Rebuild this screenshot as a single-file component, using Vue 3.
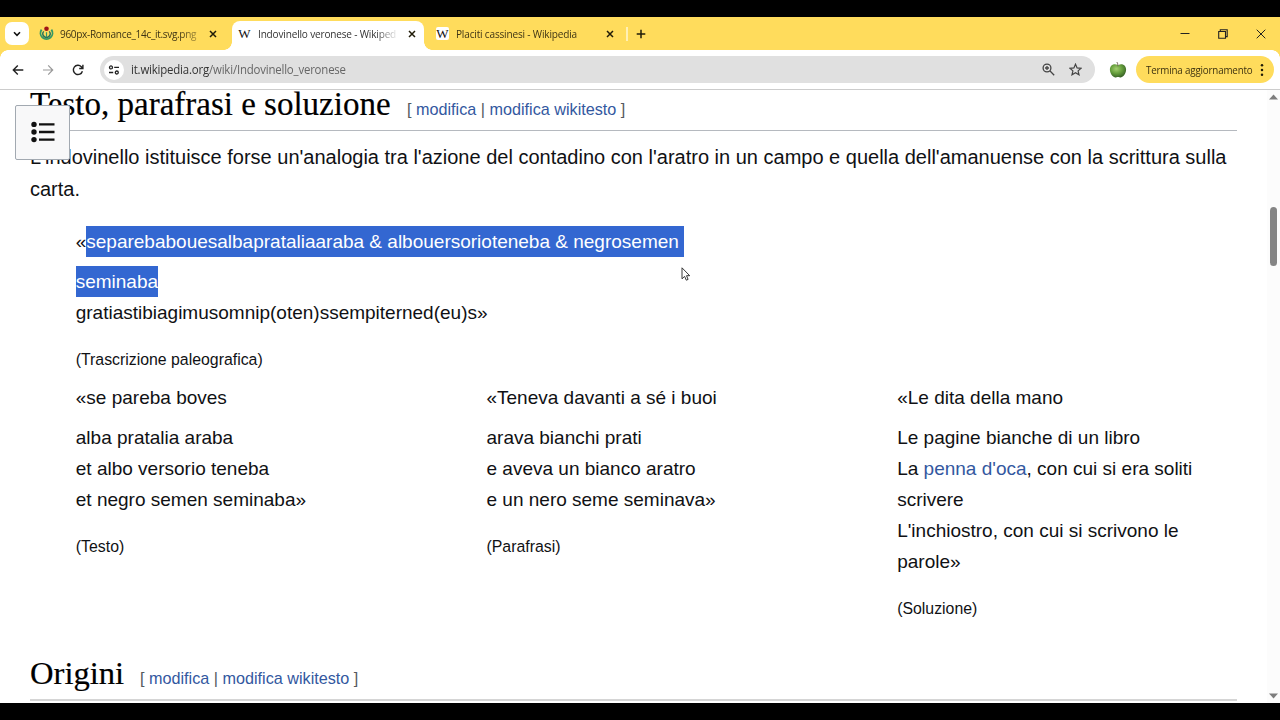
<script setup>
const tabs = [
  { title: '960px-Romance_14c_it.svg.png', kind: 'wm', cls: 'first' },
  { title: 'Indovinello veronese - Wikiped', kind: 'w', cls: 'active' },
  { title: 'Placiti cassinesi - Wikipedia', kind: 'w', cls: 'third' },
]
const columns = [
  { lines: ['«se pareba boves', 'alba pratalia araba', 'et albo versorio teneba', 'et negro semen seminaba»'], caption: '(Testo)' },
  { lines: ['«Teneva davanti a sé i buoi', 'arava bianchi prati', 'e aveva un bianco aratro', 'e un nero seme seminava»'], caption: '(Parafrasi)' },
]
</script>

<template>
  <div class="screen">
    <header class="tabstrip">
      <div class="search-tabs">
        <svg width="10" height="8" viewBox="0 0 10 8"><path d="M2 2.3 5 5.3 8 2.3" fill="none" stroke="#111" stroke-width="1.6" /></svg>
      </div>
      <div v-for="t in tabs" :key="t.title" class="tab" :class="t.cls">
        <svg v-if="t.kind === 'wm'" class="fav" width="15" height="15" viewBox="0 0 15 15">
          <circle cx="7.5" cy="2.8" r="2.3" fill="#a01515" />
          <path d="M2.600 3.600a6 6 0 1 0 9.800 0" fill="none" stroke="#396" stroke-width="1.900" />
          <path d="M4.800 5.400a3.600 3.600 0 1 0 5.400 0" fill="none" stroke="#28705c" stroke-width="1.400" />
          <path d="M7.5 6.2v5" stroke="#396" stroke-width="1.2" />
        </svg>
        <span v-else class="fav wiki">W</span>
        <span class="title">{{ t.title }}</span>
        <svg class="close" width="8" height="8" viewBox="0 0 8 8"><path d="m1 1 6 6M7 1 1 7" fill="none" stroke="#201c08" stroke-width="1.5" /></svg>
      </div>
      <i class="sep"></i>
      <svg class="plus" width="10" height="10" viewBox="0 0 10 10"><path d="M5 .7v8.6M.7 5h8.6" stroke="#201c08" stroke-width="1.5" /></svg>
      <div class="win">
        <svg width="10" height="10" viewBox="0 0 10 10"><path d="M.5 4.500h9" stroke="#222" /></svg>
        <svg width="10" height="10" viewBox="0 0 10 10"><path d="M.7 2.5h6.8v6.8H.7zM2.3 2.5V.8H9.2v6.8H7.5" fill="none" stroke="#222" stroke-width="1.1" /></svg>
        <svg width="10" height="10" viewBox="0 0 10 10"><path d="m.7.7 8.6 8.6M9.3.7.7 9.3" stroke="#222" stroke-width="1" /></svg>
      </div>
    </header>

    <div class="toolbar">
      <svg class="back" width="12" height="12" viewBox="0 0 12 12"><path d="M11.300 6H1.5M5.8 1.4 1.3 6l4.5 4.6" fill="none" stroke="#222" stroke-width="1.4" /></svg>
      <svg class="fwd" width="12" height="12" viewBox="0 0 12 12"><path d="M1 6h9.5M6.2 1.4 10.7 6l-4.5 4.6" fill="none" stroke="#999" stroke-width="1.2" /></svg>
      <svg class="reload" width="12" height="12" viewBox="0 0 12 12"><path d="M10.4 7.2A4.6 4.6 0 1 1 9.3 2.7L10.6 4M10.9.8v3.7H7.2" fill="none" stroke="#222" stroke-width="1.4" /></svg>
      <div class="omnibox">
        <div class="site">
          <svg width="12" height="10" viewBox="0 0 12 10" fill="none" stroke="#222" stroke-width="1.3"><circle cx="3" cy="2.4" r="1.5" /><path d="M6.2 2.4h4.8M1 7.5h4.2" /><circle cx="8.8" cy="7.5" r="1.5" /></svg>
        </div>
        <span class="url">it.wikipedia.org<em>/wiki/Indovinello_veronese</em></span>
        <svg class="zoomi" width="13" height="13" viewBox="0 0 13 13" fill="none" stroke="#444" stroke-width="1.3"><circle cx="5" cy="5" r="3.9" /><path d="m7.8 7.8 4.4 4.4M5 3v4M3 5h4" /></svg>
        <svg class="star" width="13" height="13" viewBox="0 0 13 13"><path d="m6.5 1.2 1.6 3.7 4 .4-3 2.6.9 3.9-3.5-2.1L3 11.8l.9-3.9-3-2.6 4-.4z" fill="none" stroke="#444" stroke-width="1.2" /></svg>
      </div>
      <svg class="apple" width="18" height="18" viewBox="0 0 18 18">
        <defs><radialGradient id="ap" cx=".4" cy=".35" r=".65"><stop offset="0" stop-color="#a4cf70" /><stop offset=".55" stop-color="#659e3c" /><stop offset="1" stop-color="#3c6628" /></radialGradient></defs>
        <path d="M9 4.3C5 1.8.9 4.2.9 8.6c0 3.7 2.6 7.8 5.2 7.8 1.2 0 1.8-.5 2.9-.5s1.7.5 2.9.5c2.6 0 5.2-4.1 5.2-7.8C17.100 4.200 13 1.800 9 4.300z" fill="url(#ap)" />
        <path d="M9 5.300Q9 2.500 7.900 1" fill="none" stroke="#6a5b50" stroke-width=".9" />
      </svg>
      <div class="update"><span>Termina aggiornamento</span>
        <svg width="4" height="14" viewBox="0 0 4 14" fill="#201c08"><circle cx="2" cy="2.300" r="1.250" /><circle cx="2" cy="7" r="1.250" /><circle cx="2" cy="11.700" r="1.250" /></svg>
      </div>
    </div>

    <main class="page">
      <article>
        <h2 class="h-first"><span class="ht">Testo, parafrasi e soluzione</span><span class="edit">[ <a>modifica</a> | <a>modifica wikitesto</a> ]</span></h2>
        <p class="intro">L'indovinello istituisce forse un'analogia tra l'azione del contadino con l'aratro in un campo e quella dell'amanuense con la scrittura sulla<br />carta.</p>
        <div class="poem quote">
          <div class="first-line">«<span class="sel">separebabouesalbaprataliaaraba &amp; albouersorioteneba &amp; negrosemen </span></div>
          <div><span class="sel">seminaba</span></div>
          <div>gratiastibiagimusomnip(oten)ssempiterned(eu)s»</div>
          <div class="caption">(Trascrizione paleografica)</div>
        </div>
        <div class="cols">
          <div v-for="c in columns" :key="c.caption" class="poem">
            <div v-for="(l, i) in c.lines" :key="l" :class="{ 'first-line': i === 0 }">{{ l }}</div>
            <div class="caption">{{ c.caption }}</div>
          </div>
          <div class="poem">
            <div class="first-line">«Le dita della mano</div>
            <div>Le pagine bianche di un libro</div>
            <div>La <a>penna d'oca</a>, con cui si era soliti<br />scrivere</div>
            <div>L'inchiostro, con cui si scrivono le<br />parole»</div>
            <div class="caption">(Soluzione)</div>
          </div>
        </div>
        <h2 class="h-second"><span class="ht">Origini</span><span class="edit">[ <a>modifica</a> | <a>modifica wikitesto</a> ]</span></h2>
      </article>

      <div class="toc">
        <svg width="24" height="22" viewBox="0 0 24 22"><g fill="#111"><circle cx="3" cy="3.400" r="2.700" /><circle cx="3" cy="11" r="2.700" /><circle cx="3" cy="18.600" r="2.700" /></g><path d="M8 3.400h15.500M8 11h15.500M8 18.600h15.500" stroke="#111" stroke-width="2.300" /></svg>
      </div>
      <div class="scroll">
        <svg width="9" height="6" viewBox="0 0 9 6"><path d="M4.500.5 9 5.500H0z" fill="#7d7d7d" /></svg>
        <i class="thumb"></i>
        <svg width="9" height="6" viewBox="0 0 9 6"><path d="M4.500 5.500 9 .5H0z" fill="#7d7d7d" /></svg>
      </div>
      <svg class="cursor" width="10" height="15" viewBox="0 0 10 15"><path d="M1 .8v11l2.600-2.400 1.700 3.800 1.800-.8-1.600-3.700H8.700z" fill="#fff" stroke="#222" stroke-width=".9" /></svg>
    </main>
  </div>
</template>

<style>
body { background: #000; overflow: hidden; }
</style>
<style scoped>
* { box-sizing: border-box; }
svg { display: block; flex: none; }
.screen { width: 1280px; height: 720px; background: #000; padding: 17px 0; display: flex; flex-direction: column; font-family: "Open Sans", "Noto Sans", sans-serif; }
.tabstrip { height: 33px; background: #ffdc5c; display: flex; align-items: center; flex: none; padding-left: 5px; }
.search-tabs { width: 24px; height: 23px; border-radius: 7px; background: #fff; display: grid; place-items: center; }
.tab { height: 33px; display: flex; align-items: center; font-size: 11px; color: #3f3515; position: relative; }
.tab.first { width: 203px; padding-left: 10px; }
.tab.active { width: 192px; height: 29px; margin-top: 4px; padding: 0 0 4px 6px; background: #fff; border-radius: 8px 8px 0 0; color: #333; }
.tab.active::before, .tab.active::after { content: ""; position: absolute; bottom: 0; width: 8px; height: 8px; }
.tab.active::before { left: -8px; background: radial-gradient(circle at 0 0, transparent 7.500px, #fff 8px); }
.tab.active::after { right: -8px; background: radial-gradient(circle at 100% 0, transparent 7.500px, #fff 8px); }
.tab.third { width: 202px; padding-left: 12px; }
.fav { width: 15px; flex: none; }
.wiki { width: 13px; height: 13px; border-radius: 2px; background: #fff; color: #111; font: 13px/13px "Liberation Serif", serif; display: flex; justify-content: center; }
.title { white-space: nowrap; flex: none; margin-left: 7px; width: 138px; line-height: 18px; letter-spacing: -.2px; transform: scaleX(.915); transform-origin: 0 50%; }
.first .title { margin-left: 6px; letter-spacing: -.36px; -webkit-mask-image: linear-gradient(90deg, #000 86%, rgba(0, 0, 0, .4)); mask-image: linear-gradient(90deg, #000 86%, rgba(0, 0, 0, .4)); width: 151px; margin-right: -14px; }
.active .title { width: 153px; margin-right: -15px; -webkit-mask-image: linear-gradient(90deg, #000 84%, rgba(0, 0, 0, .15) 98%); mask-image: linear-gradient(90deg, #000 84%, rgba(0, 0, 0, .15) 98%); }
.third .title { width: 134px; }
.close { margin-left: 12px; }
.third .close { margin-left: auto; margin-right: 12px; }
.sep { width: 2px; height: 14px; background: #fff0b5; }
.plus { margin-left: 8px; }
.win { margin-left: auto; margin-right: 14px; display: flex; gap: 28px; }
.toolbar { height: 40px; border-bottom: 1px solid #ccc; display: flex; align-items: center; flex: none; padding-left: 12px; background: radial-gradient(circle at 8px 8px, #fff 7.500px, #ffdc5c 8px) 0 0 / 8px 8px no-repeat, radial-gradient(circle at 0 8px, #fff 7.500px, #ffdc5c 8px) 100% 0 / 8px 8px no-repeat, #fff; }
.fwd { margin-left: 18px; }
.reload { margin-left: 18px; }
.omnibox { margin-left: 16px; width: 995px; height: 27px; background: #e0e0e0; border-radius: 14px; display: flex; align-items: center; padding-left: 4px; }
.site { width: 20px; height: 20px; border-radius: 50%; background: #fff; display: grid; place-items: center; }
.url { margin-left: 7px; font-size: 12px; color: #333; letter-spacing: -.2px; white-space: nowrap; transform: scaleX(.953); transform-origin: 0 50%; }
.url em { font-style: normal; color: #666; }
.zoomi { margin-left: auto; }
.star { margin: 0 13px 0 14px; }
.apple { margin-left: 14px; }
.update { margin-left: 9px; width: 138px; height: 27px; background: #ffdc5c; border-radius: 14px; display: flex; align-items: center; padding-left: 10px; font-size: 11px; color: #3d3210; }
.update span { width: 120px; margin-right: -14px; letter-spacing: -.2px; white-space: nowrap; transform: scaleX(.89); transform-origin: 0 50%; flex: none; }
.update svg { margin-left: 8px; }
.page { height: 613px; background: #fff; overflow: hidden; position: relative; display: flex; font-family: "Liberation Sans", Arial, sans-serif; font-size: 19px; color: #101114; }
article { width: 1207px; margin-left: 30px; flex: none; }
a { color: #3358a0; }
h2 { margin: 0; font-weight: 400; display: flex; align-items: baseline; border-bottom: 1px solid #b5b9bf; white-space: nowrap; color: #000; }
.ht { font-family: "Liberation Serif", serif; font-size: 33px; line-height: 40px; flex: none; -webkit-text-stroke: .2px #000; }
.h-first { height: 41px; }
.h-first .ht { width: 377px; margin-top: -6.200px; }
.h-second .ht { width: 110px; margin-top: -1.700px; font-size: 32.600px; }
.h-second { height: 46px; margin-top: 31px; border-bottom: 2px solid #d5d5d5; }
.edit { font-size: 16.200px; color: #54595d; }
.intro { margin: 9.600px 0 0; font-size: 20px; line-height: 32.600px; white-space: nowrap; }
.poem { line-height: 31px; white-space: nowrap; }
.poem .first-line { margin-bottom: 9.400px; }
.quote { margin: 20.400px 0 0 45.700px; }
.quote .first-line { margin-bottom: 8.800px; }
.sel { background: #3367d1; color: #fff; display: inline-block; white-space: pre; height: 31px; vertical-align: top; }
.caption { font-size: 15.850px; margin-top: 16px; }
.cols { margin: 6.800px 0 0 45.800px; display: grid; grid-template-columns: 410.700px 410.700px 330px; }
.toc { position: absolute; left: 15px; top: 15px; width: 55px; height: 55px; border: 1px solid #a2a9b1; border-radius: 2px; background: #f8f8f9; display: grid; place-items: center; padding-bottom: 1px; }
.scroll { position: absolute; right: 0; top: 0; width: 12px; height: 613px; background: #fcfcfc; display: flex; flex-direction: column; align-items: center; padding: 4px 0; }
.scroll { width: 13px; }
.thumb { width: 7px; height: 59px; margin: 107px 0 auto; border-radius: 4px; background: #858585; }
.cursor { position: absolute; left: 681px; top: 177px; }
</style>
